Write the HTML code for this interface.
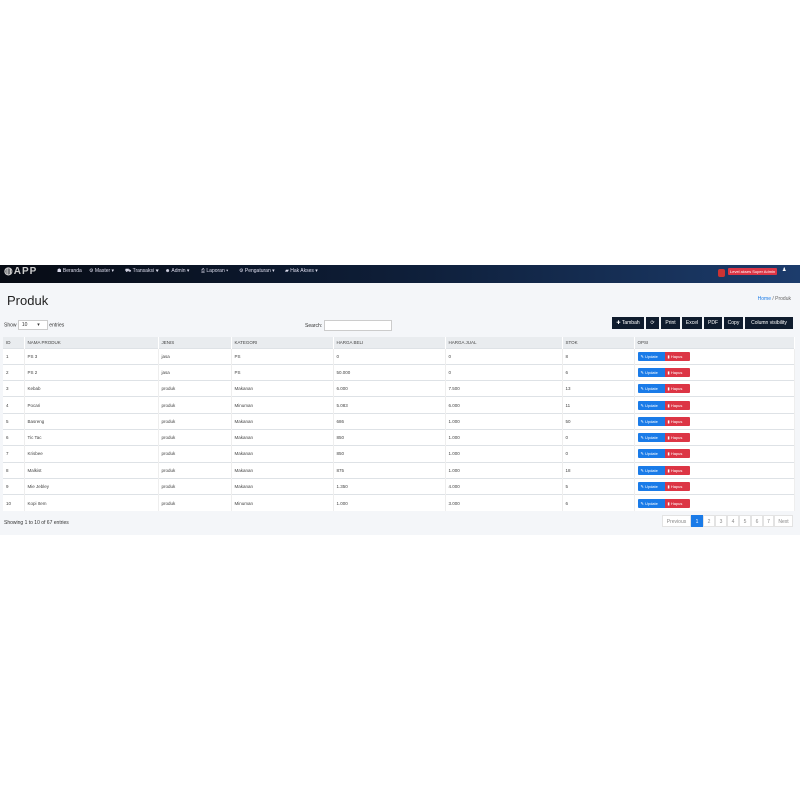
<!DOCTYPE html><html><head><style>
*{box-sizing:border-box;margin:0;padding:0}
body{width:800px;height:800px;background:#fff;font-family:"Liberation Sans",sans-serif;position:relative;overflow:hidden}
.nav{position:absolute;top:265px;left:0;width:800px;height:18px;background:linear-gradient(90deg,#070b14,#0e1e38 50%,#1c3c6c);color:#dde;font-size:5px}
.nav span{position:absolute;top:3px}
.main{position:absolute;top:283px;left:0;width:800px;height:252px;background:#f4f6f9}
h1{position:absolute;left:7px;top:10px;font-size:13px;font-weight:normal;color:#222}
.bc{position:absolute;right:9px;top:13px;font-size:5px;color:#666}
.sm{font-size:5px;color:#333;position:absolute}
table{position:absolute;left:3px;top:54px;width:792px;border-collapse:collapse;font-size:4.5px;color:#444;background:#fff}
th{background:#e9ecef;height:11px;text-align:left;font-weight:normal;padding-left:3px;border-right:1px solid #fff}
td{height:16.3px;padding-left:3px;border-top:1px solid #dee2e6;border-right:1px solid #eee}
.b{display:inline-block;color:#fff;font-size:4px;padding:2px 3px;height:9px;width:27px}
.u{background:#1a7be8;border-radius:1px 0 0 1px}.h{background:#dc3545;border-radius:0 1px 1px 0;width:25px}
.tb{position:absolute;top:34px;height:12px;background:#0f1c2e;color:#fff;font-size:5px;line-height:12px;text-align:center}
.pg{position:absolute;top:232px;height:12px;font-size:5px;line-height:12px;text-align:center;color:#888;background:#fff;border:1px solid #e3e3e3}
</style></head><body>
<div class="nav">
<span style="left:4px;top:1px;font-size:10px;font-weight:bold;color:#ccc;letter-spacing:1px">◍APP</span>
<span style="left:57px">☗ Beranda</span><span style="left:89px">⚙ Master ▾</span><span style="left:125px">⛟ Transaksi ▾</span><span style="left:165px">☻ Admin ▾</span><span style="left:201px">⎙ Laporan ▾</span><span style="left:239px">⚙ Pengaturan ▾</span><span style="left:285px">▰ Hak Akses ▾</span>
<span style="left:718px;top:4px;width:7px;height:8px;background:#c33;border-radius:2px"></span>
<span style="left:728px;top:3px;background:#dc3545;color:#fff;font-size:4px;padding:1px 2px;border-radius:1px">Level akses Super Admin</span>
<span style="left:782px;top:2px;color:#fff">♟</span>
</div>
<div class="main">
<h1>Produk</h1><div class="bc"><span style="color:#1a7be8">Home</span> / Produk</div>
<div class="sm" style="left:4px;top:37px">Show <span style="display:inline-block;width:30px;height:10px;border:1px solid #ccc;background:#fff;padding:1px 3px;vertical-align:middle">10 &nbsp; &nbsp; &nbsp; ▾</span> entries</div>
<div class="sm" style="left:305px;top:37px">Search: <span style="display:inline-block;width:68px;height:11px;border:1px solid #ccc;background:#fff;vertical-align:middle"></span></div>
<div class="tb" style="left:612px;width:32px">✚ Tambah</div><div class="tb" style="left:646px;width:13px">⟳</div><div class="tb" style="left:661px;width:19px">Print</div><div class="tb" style="left:682px;width:20px">Excel</div><div class="tb" style="left:704px;width:18px">PDF</div><div class="tb" style="left:724px;width:19px">Copy</div><div class="tb" style="left:745px;width:48px">Column visibility</div>
<table>
<tr><th style="width:21px">ID</th><th style="width:134px">NAMA PRODUK</th><th style="width:73px">JENIS</th><th style="width:102px">KATEGORI</th><th style="width:112px">HARGA BELI</th><th style="width:117px">HARGA JUAL</th><th style="width:72px">STOK</th><th>OPSI</th></tr>
<tr><td>1</td><td>PS 3</td><td>jasa</td><td>PS</td><td>0</td><td>0</td><td>8</td><td><span class="b u">✎ Update</span><span class="b h">▮ Hapus</span></td></tr>
<tr><td>2</td><td>PS 2</td><td>jasa</td><td>PS</td><td>50.000</td><td>0</td><td>6</td><td><span class="b u">✎ Update</span><span class="b h">▮ Hapus</span></td></tr>
<tr><td>3</td><td>Kebab</td><td>produk</td><td>Makanan</td><td>6.000</td><td>7.500</td><td>13</td><td><span class="b u">✎ Update</span><span class="b h">▮ Hapus</span></td></tr>
<tr><td>4</td><td>Pocari</td><td>produk</td><td>Minuman</td><td>5.083</td><td>6.000</td><td>11</td><td><span class="b u">✎ Update</span><span class="b h">▮ Hapus</span></td></tr>
<tr><td>5</td><td>Basreng</td><td>produk</td><td>Makanan</td><td>686</td><td>1.000</td><td>50</td><td><span class="b u">✎ Update</span><span class="b h">▮ Hapus</span></td></tr>
<tr><td>6</td><td>Tic Tac</td><td>produk</td><td>Makanan</td><td>850</td><td>1.000</td><td>0</td><td><span class="b u">✎ Update</span><span class="b h">▮ Hapus</span></td></tr>
<tr><td>7</td><td>Krisbee</td><td>produk</td><td>Makanan</td><td>850</td><td>1.000</td><td>0</td><td><span class="b u">✎ Update</span><span class="b h">▮ Hapus</span></td></tr>
<tr><td>8</td><td>Malkist</td><td>produk</td><td>Makanan</td><td>875</td><td>1.000</td><td>18</td><td><span class="b u">✎ Update</span><span class="b h">▮ Hapus</span></td></tr>
<tr><td>9</td><td>Mie Jebley</td><td>produk</td><td>Makanan</td><td>1.350</td><td>4.000</td><td>5</td><td><span class="b u">✎ Update</span><span class="b h">▮ Hapus</span></td></tr>
<tr><td>10</td><td>Kopi Item</td><td>produk</td><td>Minuman</td><td>1.000</td><td>3.000</td><td>6</td><td><span class="b u">✎ Update</span><span class="b h">▮ Hapus</span></td></tr>
</table>
<div class="sm" style="left:4px;top:237px">Showing 1 to 10 of 67 entries</div>
<div class="pg" style="left:662px;width:29px">Previous</div><div class="pg" style="left:691px;width:12px;background:#1a7be8;color:#fff;border-color:#1a7be8">1</div><div class="pg" style="left:703px;width:12px">2</div><div class="pg" style="left:715px;width:12px">3</div><div class="pg" style="left:727px;width:12px">4</div><div class="pg" style="left:739px;width:12px">5</div><div class="pg" style="left:751px;width:12px">6</div><div class="pg" style="left:763px;width:11px">7</div><div class="pg" style="left:774px;width:19px">Next</div>
</div>
</body></html>
